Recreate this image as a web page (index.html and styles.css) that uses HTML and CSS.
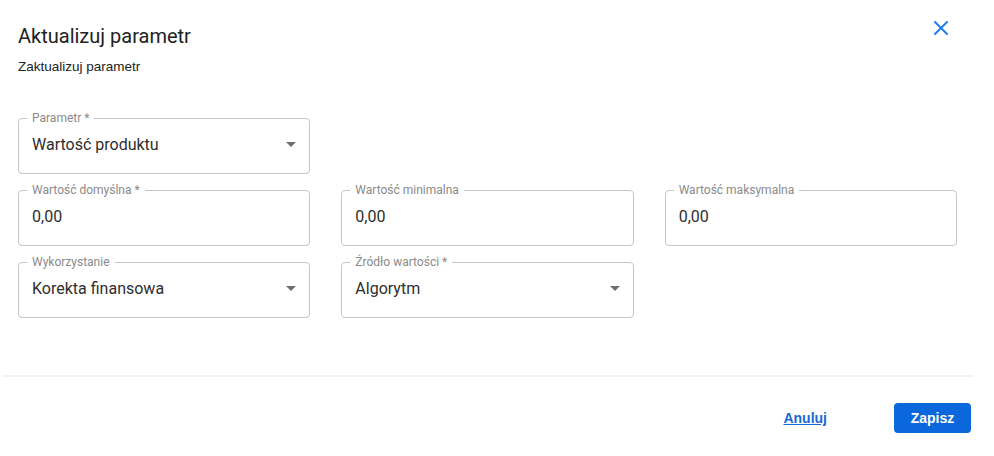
FILE: index.html
```html
<!DOCTYPE html>
<html lang="pl">
<head>
<meta charset="utf-8">
<title>Aktualizuj parametr</title>
<link rel="stylesheet" href="styles.css">
</head>
<body>
<div class="dialog">
  <div class="header">
    <div class="titles">
      <h1 class="title">Aktualizuj parametr</h1>
      <p class="subtitle">Zaktualizuj parametr</p>
    </div>
    <button class="close" aria-label="Zamknij">
      <svg width="14" height="14" viewBox="0 0 14 14"><path d="M1 1L13 13M13 1L1 13" stroke="currentColor" stroke-width="2" stroke-linecap="square" fill="none"/></svg>
    </button>
  </div>

  <div class="form">
    <div class="field select col1">
      <span class="label">Parametr *</span>
      <span class="value">Wartość produktu</span>
      <svg class="arrow" width="24" height="24" viewBox="0 0 24 24"><path d="M7 10l5 5 5-5z"/></svg>
    </div>
    <div class="spacer"></div>
    <div class="spacer"></div>

    <div class="field">
      <span class="label">Wartość domyślna *</span>
      <span class="value">0,00</span>
    </div>
    <div class="field">
      <span class="label">Wartość minimalna</span>
      <span class="value">0,00</span>
    </div>
    <div class="field">
      <span class="label">Wartość maksymalna</span>
      <span class="value">0,00</span>
    </div>

    <div class="field select">
      <span class="label">Wykorzystanie</span>
      <span class="value">Korekta finansowa</span>
      <svg class="arrow" width="24" height="24" viewBox="0 0 24 24"><path d="M7 10l5 5 5-5z"/></svg>
    </div>
    <div class="field select">
      <span class="label">Źródło wartości *</span>
      <span class="value">Algorytm</span>
      <svg class="arrow" width="24" height="24" viewBox="0 0 24 24"><path d="M7 10l5 5 5-5z"/></svg>
    </div>
  </div>

  <div class="divider"></div>

  <div class="footer">
    <a class="cancel" href="#">Anuluj</a>
    <button class="save">Zapisz</button>
  </div>
</div>
</body>
</html>
```

FILE: styles.css
```css
* { box-sizing: border-box; }

body {
  margin: 0;
  background: #fff;
  font-family: Roboto, "Liberation Sans", Arial, sans-serif;
  color: #212121;
}

.dialog {
  width: 994px;
  height: 456px;
}

.header {
  display: flex;
  justify-content: space-between;
  align-items: flex-start;
  padding: 20px 45px 0 18px;
}

.titles {
  padding-top: 4px;
}

.title {
  margin: 0;
  font-size: 20px;
  line-height: 24px;
  font-weight: 400;
  color: #222;
}

.subtitle {
  margin: 11px 0 0;
  font-family: "Liberation Sans", Arial, sans-serif;
  font-size: 13.5px;
  line-height: 16px;
  color: #222;
}

.close {
  border: 0;
  background: none;
  padding: 0;
  width: 16px;
  height: 16px;
  display: flex;
  align-items: center;
  justify-content: center;
  color: #1f7ff0;
  cursor: pointer;
}

.form {
  display: grid;
  grid-template-columns: repeat(3, 1fr);
  column-gap: 31px;
  row-gap: 16px;
  padding: 0 37px 0 18px;
  margin-top: 43px;
}

.field {
  position: relative;
  height: 56px;
  border: 1px solid #c6c6c6;
  border-radius: 4px;
  display: flex;
  align-items: center;
  padding: 0 13px 3px;
}

.label {
  position: absolute;
  top: -8px;
  left: 8px;
  padding: 0 5px;
  background: #fff;
  font-size: 12px;
  line-height: 14px;
  color: #8a8a8a;
  white-space: nowrap;
}

.value {
  font-size: 16px;
  line-height: 19px;
  color: #2e2e2e;
  flex: 1;
}

.arrow {
  fill: #6f6f6f;
  margin-right: -7px;
  margin-bottom: 2px;
}

.divider {
  margin: 57px 21px 0 3px;
  height: 2px;
  background: #f3f3f3;
}

.footer {
  display: flex;
  justify-content: flex-end;
  align-items: center;
  padding: 26px 23px 0 0;
}

.cancel {
  font-family: "Liberation Sans", Arial, sans-serif;
  font-weight: 700;
  font-size: 14px;
  color: #1769d8;
  text-decoration: underline;
  margin-right: 67px;
}

.save {
  height: 30px;
  width: 77px;
  border: 0;
  border-radius: 4px;
  background: #0a68dc;
  color: #fff;
  font-family: "Liberation Sans", Arial, sans-serif;
  font-weight: 700;
  font-size: 14px;
  cursor: pointer;
}
```
